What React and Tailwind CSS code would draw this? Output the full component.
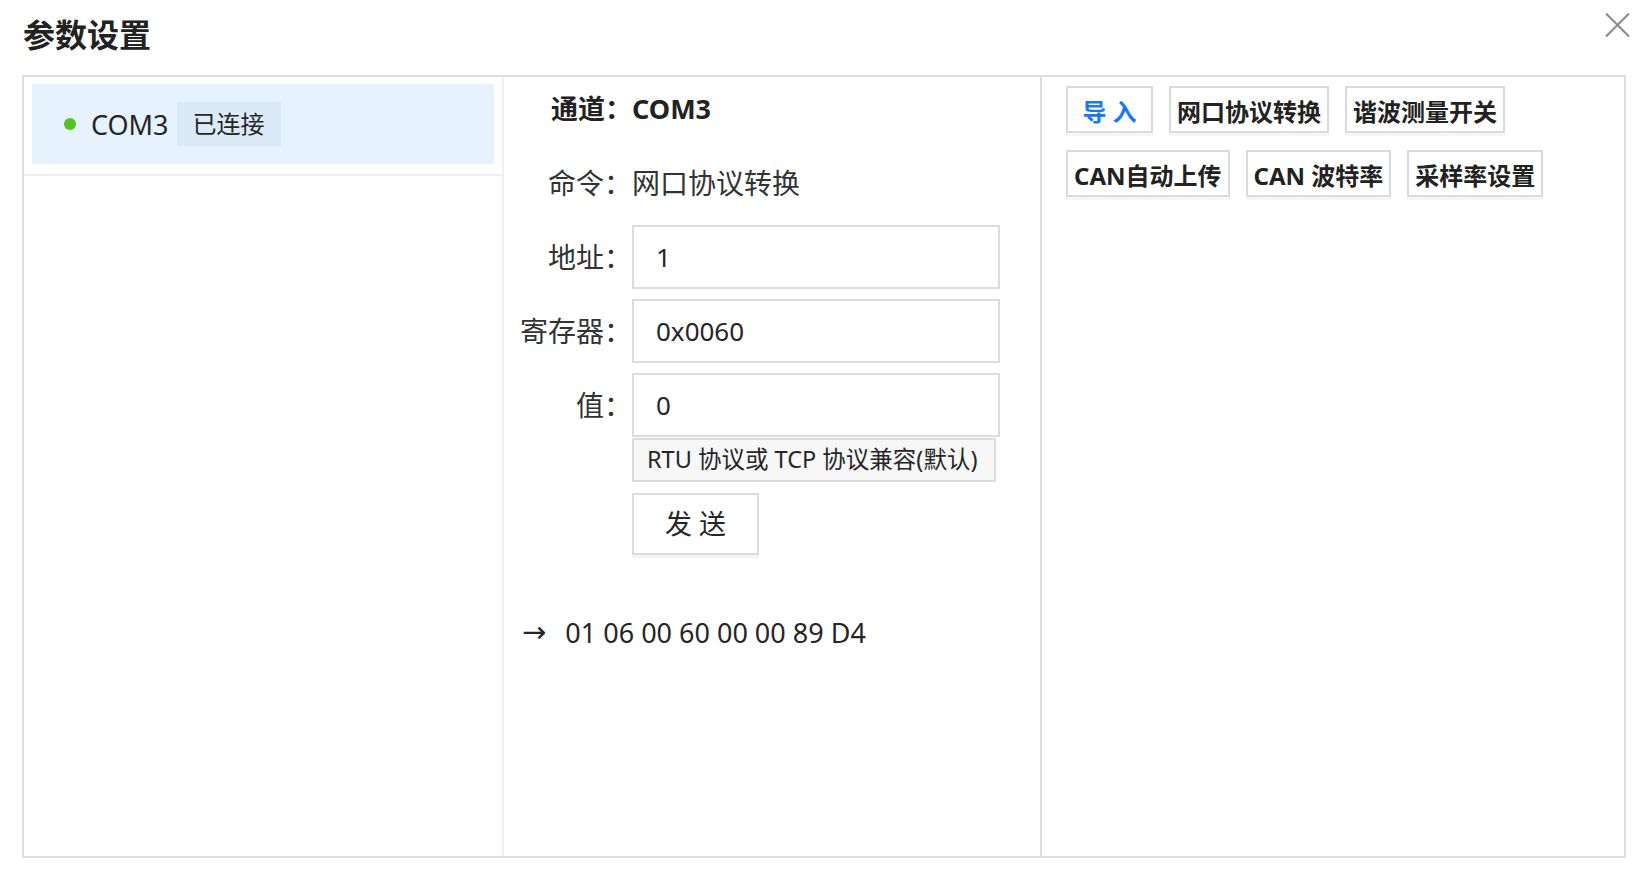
import React from "react";

const font = { fontFamily: '"Noto Sans", "Noto Sans CJK SC", sans-serif' };

function Btn({ children, blue, w }) {
  return (
    <div
      className={`h-[47px] flex items-center justify-center border-2 border-[#dadada] bg-white px-[6px] pt-[4px] text-[24px] font-bold leading-none whitespace-nowrap shadow-[0_3px_0_#f6f6f6] ${blue ? "text-[#1677ff]" : "text-[#222]"} ${w || ""}`}
    >
      {children}
    </div>
  );
}

function Row({ label, children, bold }) {
  return (
    <div className="flex items-center h-[64px]">
      <div className={`w-[128px] text-right whitespace-nowrap ${bold ? "text-[27px] font-bold text-[#222]" : "text-[28px] text-[#333]"}`}>
        {label}
      </div>
      {children}
    </div>
  );
}

function Field({ value }) {
  return (
    <input
      readOnly
      value={value}
      className="w-[368px] h-[64px] border-2 border-[#dcdcdc] bg-white pl-[22px] text-[26px] text-[#262626] outline-none"
      style={font}
    />
  );
}

export default function App() {
  return (
    <div className="w-[1642px] h-[876px] bg-white flex flex-col overflow-hidden" style={font}>
      <div className="h-[75px] flex items-start justify-between">
        <div className="ml-[23px] mt-[14px] text-[32px] font-bold text-[#222] leading-[42px]">参数设置</div>
        <svg className="mr-[11px] mt-[12px]" width="27" height="26" viewBox="0 0 27 26">
          <path d="M2 1.5 L25 24.5 M25 1.5 L2 24.5" stroke="#8a8a8a" strokeWidth="2" fill="none" />
        </svg>
      </div>
      <div className="ml-[22px] mr-[16px] h-[783px] border-2 border-[#dedede] flex">
        {/* left column */}
        <div className="w-[480px] border-r-2 border-[#efefef] flex flex-col">
          <div className="px-[8px] pt-[7px] pb-[10px] border-b-2 border-[#f0f0f0]">
            <div className="h-[80px] bg-[#e6f3fe] flex items-center pl-[32px]">
              <span className="w-[12px] h-[12px] rounded-full bg-[#52c41a]" />
              <span className="ml-[15px] text-[27px] text-[#262626] leading-none">COM3</span>
              <span className="ml-[8px] h-[44px] px-[16px] flex items-center bg-[#dce9f6] text-[24px] text-[#262626]">已连接</span>
            </div>
          </div>
        </div>
        {/* middle column */}
        <div className="w-[538px] border-r-2 border-[#dcdcdc] flex flex-col">
          <div className="flex flex-col gap-[10px]">
            <Row label="通道：" bold>
              <span className="text-[27px] font-bold text-[#222]">COM3</span>
            </Row>
            <Row label="命令：">
              <span className="text-[28px] text-[#333]">网口协议转换</span>
            </Row>
            <Row label="地址：">
              <Field value="1" />
            </Row>
            <Row label="寄存器：">
              <Field value="0x0060" />
            </Row>
            <Row label="值：">
              <Field value="0" />
            </Row>
          </div>
          <div className="ml-[128px] mt-[1px] w-[364px] h-[44px] border-2 border-[#dcdcdc] bg-[#f7f7f7] flex items-center pl-[13px] text-[23.5px] text-[#262626] whitespace-nowrap">
            RTU 协议或 TCP 协议兼容(默认)
          </div>
          <div className="ml-[128px] mt-[11px] w-[127px] h-[62px] border-2 border-[#dcdcdc] bg-white flex items-center justify-center text-[27px] text-[#262626] shadow-[0_3px_0_#f4f4f4]">
            发 送
          </div>
          <div className="mt-[58px] ml-[18px] flex items-center h-[40px] text-[27px] text-[#262626]">
            <span className="text-[29px]" style={{ fontFamily: '"DejaVu Sans", sans-serif' }}>→</span>
            <span className="ml-[19px]">01 06 00 60 00 00 89 D4</span>
          </div>
        </div>
        {/* right column */}
        <div className="flex-1 pl-[24px] pr-[24px] pt-[9px]">
          <div className="flex flex-wrap gap-x-[16px] gap-y-[17px]">
            <Btn blue w="w-[87px]">导 入</Btn>
            <Btn>网口协议转换</Btn>
            <Btn>谐波测量开关</Btn>
            <Btn>CAN自动上传</Btn>
            <Btn>CAN 波特率</Btn>
            <Btn>采样率设置</Btn>
          </div>
        </div>
      </div>
    </div>
  );
}
